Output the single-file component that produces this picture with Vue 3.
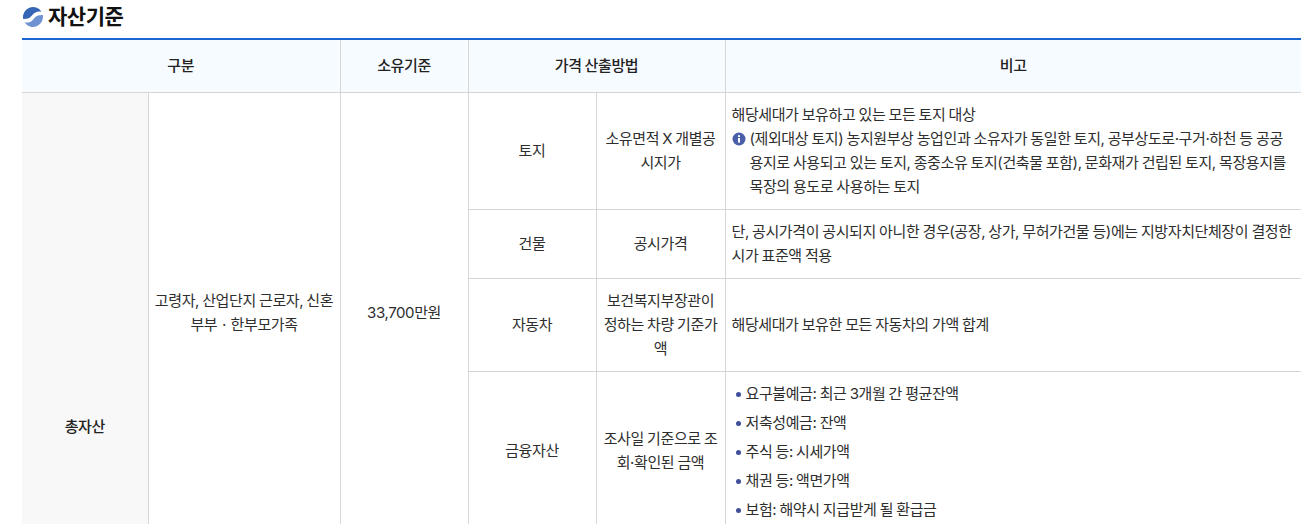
<script setup>
const items = [
  '요구불예금: 최근 3개월 간 평균잔액',
  '저축성예금: 잔액',
  '주식 등: 시세가액',
  '채권 등: 액면가액',
  '보험: 해약시 지급받게 될 환급금'
]
</script>

<template>
  <main class="page">
    <h2 class="title">
      <svg class="logo" width="22" height="22" viewBox="0 0 22 22">
        <path d="M1.2 13 A10 10 0 0 1 19.5 5.8 C16 4.8 13.5 5.8 11.5 7.8 C9.5 10 7.5 13.5 1.2 13 Z" fill="#3565b5" />
        <path d="M20.8 9 A10 10 0 0 1 2.5 16.2 C6 17.2 8.5 16.2 10.5 14.2 C12.5 12 14.5 8.5 20.8 9 Z" fill="#6f92d2" />
      </svg>
      <span>자산기준</span>
    </h2>
    <table class="tbl">
      <colgroup>
        <col class="c1" /><col class="c2" /><col class="c3" /><col class="c4" /><col class="c5" /><col />
      </colgroup>
      <thead>
        <tr>
          <th colspan="2">구분</th>
          <th>소유기준</th>
          <th colspan="2">가격 산출방법</th>
          <th>비고</th>
        </tr>
      </thead>
      <tbody>
        <tr class="r1">
          <td rowspan="5" class="side down">총자산</td>
          <td rowspan="4" class="down">고령자, 산업단지 근로자, 신혼부부ㆍ한부모가족</td>
          <td rowspan="4" class="down">33,700만원</td>
          <td class="up">토지</td>
          <td class="up">소유면적 X 개별공시지가</td>
          <td class="note up">
            <p>해당세대가 보유하고 있는 모든 토지 대상</p>
            <p class="info">
              <svg class="i" width="14" height="14" viewBox="0 0 14 14">
                <circle cx="7" cy="7" r="6.5" fill="#4a5fa8" />
                <rect x="6" y="6" width="2" height="4.6" fill="#fff" />
                <rect x="6" y="3.2" width="2" height="1.8" fill="#fff" />
              </svg>
              (제외대상 토지) 농지원부상 농업인과 소유자가 동일한 토지, 공부상도로·구거·하천 등 공공용지로 사용되고 있는 토지, 종중소유 토지(건축물 포함), 문화재가 건립된 토지, 목장용지를 목장의 용도로 사용하는 토지
            </p>
          </td>
        </tr>
        <tr class="r2">
          <td class="up">건물</td>
          <td class="up">공시가격</td>
          <td class="note up">단, 공시가격이 공시되지 아니한 경우(공장, 상가, 무허가건물 등)에는 지방자치단체장이 결정한 시가 표준액 적용</td>
        </tr>
        <tr class="r3">
          <td class="up">자동차</td>
          <td class="up">보건복지부장관이 정하는 차량 기준가액</td>
          <td class="note up">해당세대가 보유한 모든 자동차의 가액 합계</td>
        </tr>
        <tr class="r4">
          <td class="up">금융자산</td>
          <td class="up">조사일 기준으로 조회·확인된 금액</td>
          <td class="note up">
            <ul class="list">
              <li v-for="t in items" :key="t">{{ t }}</li>
            </ul>
          </td>
        </tr>
        <tr class="r5"><td colspan="5"></td></tr>
      </tbody>
    </table>
  </main>
</template>

<style>
html, body { margin: 0; background: #fff; overflow: hidden; }
</style>

<style scoped>
.page {
  height: 524px;
  overflow: hidden;
  box-sizing: border-box;
  padding: 0 7px 0 22px;
  font-family: Inter, "Noto Sans CJK KR", "Noto Sans", sans-serif;
  color: #2e2e2e;
}
.title {
  display: flex;
  align-items: center;
  gap: 4px;
  height: 38px;
  margin: 0;
  padding-bottom: 8px;
  box-sizing: border-box;
  font-size: 21px;
  font-weight: 700;
  color: #111;
  letter-spacing: -0.5px;
}
.logo { margin-top: 4px; }
.tbl {
  width: 1279px;
  table-layout: fixed;
  border-collapse: collapse;
  border-top: 2px solid #1a66d0;
  font-size: 15px;
  line-height: 24px;
  letter-spacing: -0.4px;
  word-spacing: -0.6px;
}
.c1 { width: 126px; }
.c2 { width: 192px; }
.c3 { width: 128px; }
.c4 { width: 128px; }
.c5 { width: 129px; }
th {
  height: 52px;
  padding: 0;
  background: #f6fbff;
  font-weight: 500;
  color: #222;
  border: 1px solid #d6d6d6;
  border-top: 0;
}
td {
  padding: 5px 6px;
  text-align: center;
  border: 1px solid #d6d6d6;
  word-break: break-all;
}
td.up { padding: 4px 6px 5px; }
td.down { padding: 7px 6px 5px; }
th:first-child, td:first-child { border-left: 0; }
th:last-child, td:last-child { border-right: 0; }
.side { background: #f8f8f8; font-weight: 500; color: #222; }
.note { text-align: left; }
.note p { margin: 0; }
.info { position: relative; padding-left: 18px; }
.i { position: absolute; left: 0; top: 5px; }
.r1 { height: 117px; }
.r2 { height: 69px; }
.r3 { height: 93px; }
.r4 { height: 160px; }
.r5 { height: 228px; }
.list { list-style: none; margin: 0; padding: 0; }
.list li {
  position: relative;
  padding-left: 14px;
  line-height: 29px;
}
.list li::before {
  content: "";
  position: absolute;
  left: 4px;
  top: 13px;
  width: 5px;
  height: 5px;
  border-radius: 50%;
  background: #3f4f9a;
}
</style>
